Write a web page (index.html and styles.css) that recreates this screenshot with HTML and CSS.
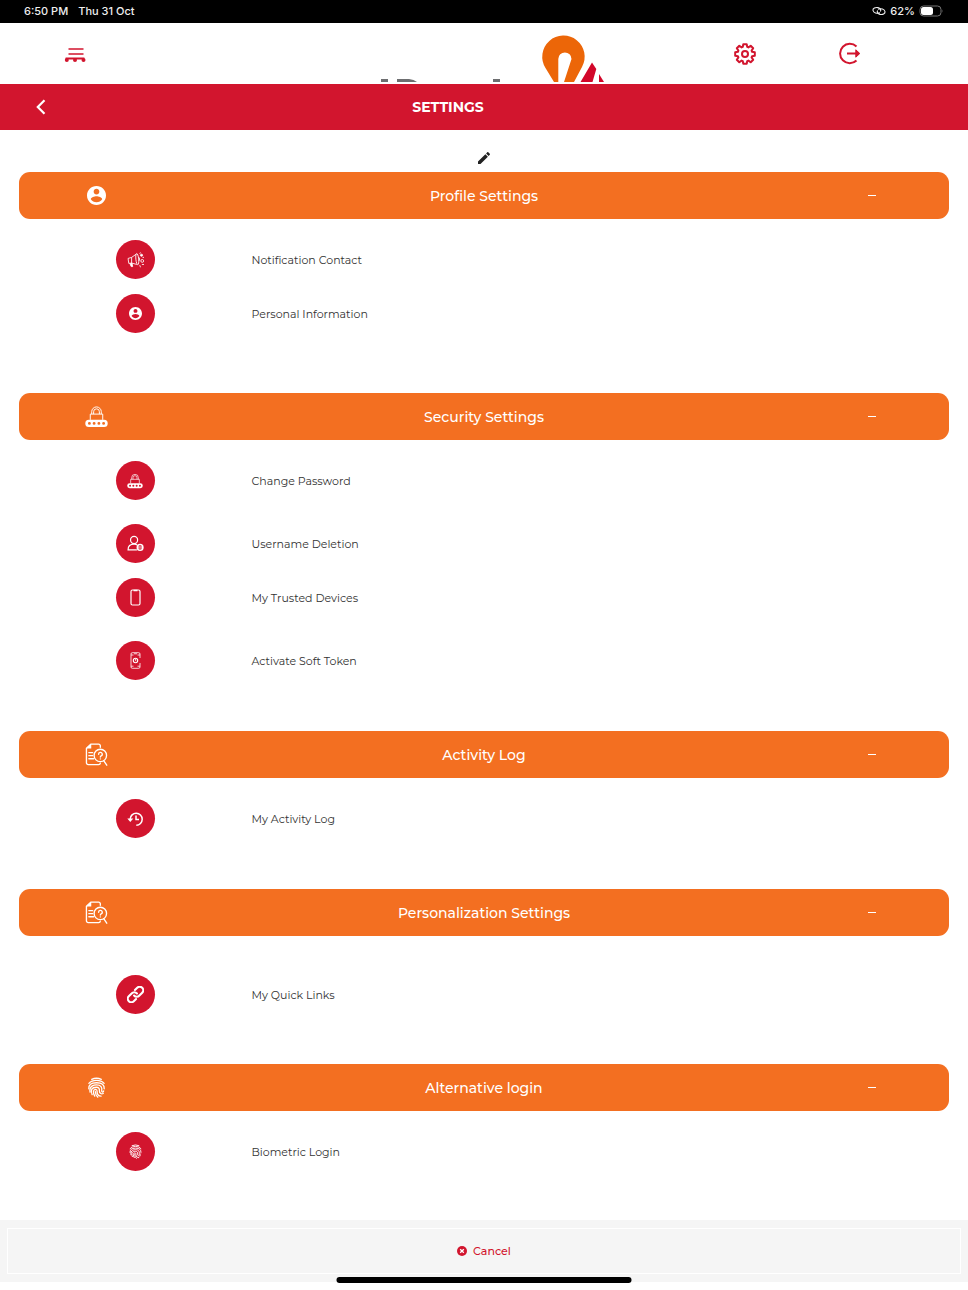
FILE: index.html
```
<!DOCTYPE html>
<html lang="en">
<head>
    <meta charset="UTF-8">
    <meta name="viewport" content="width=device-width, initial-scale=1.0">
    <title>Settings</title>
    <link rel="stylesheet" href="styles.css">
</head>
<body>
    <!-- Shared icons -->
    <svg class="icon-defs" aria-hidden="true">
        <symbol id="icon-user" viewBox="2 2 20 20">
            <path fill="currentColor" d="M12 2C6.48 2 2 6.48 2 12s4.48 10 10 10 10-4.48 10-10S17.52 2 12 2zm0 3c1.66 0 3 1.34 3 3s-1.34 3-3 3-3-1.34-3-3 1.34-3 3-3zm0 14.2c-2.5 0-4.71-1.28-6-3.22.03-1.99 4-3.08 6-3.08 1.99 0 5.97 1.09 6 3.08-1.29 1.94-3.5 3.22-6 3.22z"/>
        </symbol>
        <symbol id="icon-lock" viewBox="0 0 24 24">
            <path fill="none" stroke="currentColor" d="M5.5 15.5V9.5h13v6M7 9.500V7a5 5 0 0 1 10 0v2.500M9 9.500V7a3 3 0 0 1 6 0v2.500"/>
            <path fill="currentColor" fill-rule="evenodd" d="M4 15.500h16a3.700 3.700 0 0 1 0 7.400H4a3.700 3.700 0 0 1 0-7.400zM4.600 17.700a1.500 1.500 0 1 0 0 3 1.500 1.500 0 0 0 0-3zM9.500 17.700a1.500 1.500 0 1 0 0 3 1.500 1.500 0 0 0 0-3zM14.500 17.700a1.500 1.500 0 1 0 0 3 1.500 1.500 0 0 0 0-3zM19.400 17.700a1.500 1.500 0 1 0 0 3 1.500 1.500 0 0 0 0-3z"/>
        </symbol>
        <symbol id="icon-log" viewBox="0 0 24 24">
            <g fill="none" stroke="currentColor" stroke-width="1.400" stroke-linecap="round" stroke-linejoin="round">
                <path d="M16 4.500V3a1.800 1.800 0 0 0-1.800-1.800H6L1.500 5.500v15.200A1.800 1.800 0 0 0 3.300 22.500h11A1.800 1.800 0 0 0 16 21M4 10h4M4 13.200h4M4 16.400h5"/>
                <circle cx="16" cy="13" r="6.500"/>
                <path d="M19.700 18.700l3 4.500M14.200 11.700a1.900 1.900 0 1 1 2.700 1.700q-.9.4-.9 1.200M16 16.500v.1"/>
            </g>
            <path fill="currentColor" d="M6.500 1v4.800H1.300z"/>
        </symbol>
        <symbol id="icon-fingerprint" viewBox="0 0 24 24">
            <g fill="none" stroke="currentColor" stroke-width="1.500" stroke-linecap="round">
                <path d="M6.500 2.600Q12 .200 17.500 2.600"/>
                <path d="M3.300 7.300Q6.500 3.800 12 3.800T20.700 7.300"/>
                <path d="M3.200 13.500Q2.700 6.700 12 6.600T20.800 13.500"/>
                <path d="M4.700 17.300C3 9 11 9.100 12 9.100c5.300 0 6.600 3 6 6.500-.3 2.100 2 2 2.200.4"/>
                <path d="M7 20.200C4.800 14.600 6.600 11.700 11.800 11.700c3.300 0 3.700 2 3.500 4-.1 3.200 2.600 4.100 4.400 3.200"/>
                <path d="M10 21.800C7.700 17.500 8 14.300 11 14.200c2 0 1.600 1.500 1.700 3 .1 3 2.300 4.700 4.500 4.700"/>
                <path d="M10.700 16.800c.2 3 1.300 5 2.800 6.200"/>
            </g>
        </symbol>
    </svg>

    <div class="status-bar">
        <span>6:50 PM</span>
        <span>Thu 31 Oct</span>
        <div class="status-right">
            <svg width="14" height="10" viewBox="0 0 14 10" fill="none" stroke="currentColor" stroke-width="1.100">
                <path d="M8 6.800C5 8 1.500 6.700 1 4.500.5 2.200 3.500 1 6 1.600c2.200.6 3.400 2.200 2.400 4"/>
                <path d="M6 3.200C9 2 12.500 3.300 13 5.500c.5 2.300-2.500 3.500-5 2.900-2.200-.6-3.400-2.200-2.400-4"/>
            </svg>
            <span>62%</span>
            <svg width="25" height="12" viewBox="0 0 25 12">
                <rect x="1" y="1" width="21" height="10" rx="3.500" fill="none" stroke="#777"/>
                <rect x="2" y="2" width="12" height="8" rx="2.500" fill="#fff"/>
                <path d="M23.500 4.500q1 1.500 0 3z" fill="#777"/>
            </svg>
        </div>
    </div>

    <header class="top-bar">
        <button class="icon-btn menu-btn" aria-label="Menu">
            <svg width="22" height="16" viewBox="0 0 22 16">
                <path d="M4.500 3h15M4.500 8h15" stroke="currentColor" stroke-width="1.700" fill="none"/>
                <path d="M2.500 13.500V12.500h17v1" stroke="currentColor" stroke-width="1.800" fill="none"/>
                <g fill="currentColor">
                    <circle cx="2.800" cy="14" r="2"/>
                    <circle cx="11" cy="14" r="2"/>
                    <circle cx="19.500" cy="14" r="2"/>
                </g>
            </svg>
        </button>
        <svg class="logo" width="224" height="61" viewBox="0 0 224 61" role="img" aria-label="Bank logo">
            <path fill="#6d6e70" d="M0 56h7v3H0zM16 56h12q5 .300 8 3H16zM112 56h7v3h-7z"/>
            <path fill="#ec6608" d="M173 59L164.500 45a21.200 21.200 0 1 1 36.500-1L193 59H183L190.500 36a6.600 6.600 0 1 0-13.200 0V59z"/>
            <path fill="#d2072a" d="M199.500 59L211 39.500 215.300 46 211.500 59zM218 51L223 59h-5z"/>
        </svg>
        <button class="icon-btn" aria-label="Settings">
            <svg width="24" height="24" viewBox="0 0 24 24" fill="none" stroke="currentColor" stroke-width="2" stroke-linejoin="round">
                <path d="M13.700 2.200L14.200 4.900 15.400 5.400 17.700 3.800 20.200 6.300 18.600 8.600 19.100 9.800 21.800 10.300V13.700L19.100 14.200 18.600 15.400 20.200 17.700 17.700 20.200 15.400 18.600 14.200 19.100 13.700 21.800H10.300L9.800 19.100 8.600 18.600 6.300 20.200 3.800 17.700 5.400 15.400 4.900 14.200 2.200 13.700V10.300L4.900 9.800 5.400 8.600 3.800 6.300 6.300 3.800 8.600 5.400 9.800 4.900 10.300 2.200z"/>
                <circle cx="12" cy="12" r="3"/>
            </svg>
        </button>
        <button class="icon-btn" aria-label="Log out">
            <svg width="24" height="24" viewBox="0 0 24 24" fill="none" stroke="currentColor" stroke-width="2">
                <path d="M18.500 4.500A9.700 9.700 0 1 0 18.500 18.500M9 11.500h12"/>
                <path d="M17.800 7.800l4 3.700-4 3.700z" fill="currentColor" stroke-width="1"/>
            </svg>
        </button>
    </header>

    <div class="title-bar">
        <button class="back-btn" aria-label="Back">
            <svg width="10" height="16" viewBox="0 0 10 16" fill="none" stroke="currentColor" stroke-width="2.200">
                <path d="M8.500 1.200L1.800 8l6.700 6.800"/>
            </svg>
        </button>
        <h1>SETTINGS</h1>
    </div>

    <main>
        <button class="edit-btn" aria-label="Edit">
            <svg width="16" height="16" viewBox="0 0 24 24" fill="currentColor">
                <path d="M3 17.250V21h3.750L17.810 9.940l-3.750-3.750L3 17.250zM20.710 7.040c.39-.39.39-1.020 0-1.410l-2.340-2.340c-.39-.39-1.020-.39-1.410 0l-1.830 1.830 3.750 3.750 1.830-1.830z"/>
            </svg>
        </button>

        <section>
            <button class="section-head" aria-expanded="true">
                <svg width="19" height="19"><use href="#icon-user"/></svg>
                <span>Profile Settings</span>
                <span class="minus"></span>
            </button>
            <div class="items">
                <a href="#" class="item">
                    <span class="circle">
                        <svg width="17" height="17" viewBox="0 0 24 24" fill="none" stroke="currentColor" stroke-width="1.200">
                            <path d="M1.500 10.500l5-1.500v8l-4 .5zM6.500 9L13 4.500M6.500 17l7.500 2"/>
                            <ellipse cx="14.500" cy="11.500" rx="2" ry="8" transform="rotate(-6 14.500 11.500)"/>
                            <path d="M4 17.500l2 4.500h2l-1-5" fill="currentColor"/>
                            <path d="M18 4l1-2M22 9h2M18 20l1 3M21 19h3M17 9q2 2 0 5"/>
                            <circle cx="20.500" cy="6" r="1.500" fill="currentColor"/>
                            <circle cx="21.500" cy="14" r="2"/>
                        </svg>
                    </span>
                    <span>Notification Contact</span>
                </a>
                <a href="#" class="item item-tall">
                    <span class="circle"><svg width="13" height="13"><use href="#icon-user"/></svg></span>
                    <span>Personal Information</span>
                </a>
            </div>
        </section>

        <section>
            <button class="section-head" aria-expanded="true">
                <svg width="23" height="23"><use href="#icon-lock"/></svg>
                <span>Security Settings</span>
                <span class="minus"></span>
            </button>
            <div class="items">
                <a href="#" class="item item-tall">
                    <span class="circle"><svg width="16" height="16"><use href="#icon-lock"/></svg></span>
                    <span>Change Password</span>
                </a>
                <a href="#" class="item">
                    <span class="circle">
                        <svg width="17" height="17" viewBox="0 0 24 24" fill="none" stroke="currentColor" stroke-width="1.700">
                            <circle cx="10" cy="7" r="5"/>
                            <path d="M14 21H1.500c0-5 3.500-8 8.500-8q2.500 0 4.500 1"/>
                            <circle cx="18.500" cy="17.500" r="5" fill="currentColor" stroke="none"/>
                            <path d="M17 15h3v5h-3zM18.500 15v5" stroke="#d2152e" stroke-width="1"/>
                        </svg>
                    </span>
                    <span>Username Deletion</span>
                </a>
                <a href="#" class="item item-tall">
                    <span class="circle">
                        <svg width="11" height="17" viewBox="0 0 11 17" fill="none" stroke="currentColor" stroke-width="1.200">
                            <rect x="1" y="1" width="9" height="15" rx="1.500"/>
                            <path d="M3.500 1.500h4" stroke-width="1.500"/>
                        </svg>
                    </span>
                    <span>My Trusted Devices</span>
                </a>
                <a href="#" class="item">
                    <span class="circle">
                        <svg width="11" height="17" viewBox="0 0 11 17" fill="none" stroke="currentColor" stroke-width=".800">
                            <path d="M10 6V2a1.300 1.300 0 0 0-1.300-1.300H2.300A1.300 1.300 0 0 0 1 2v13a1.300 1.300 0 0 0 1.300 1.300h6.400A1.300 1.300 0 0 0 10 15v-4M1 3h2.500M7.500 3H10M1 14.200h2.500M7.500 14.200H10M4 1.800h3"/>
                            <circle cx="5.500" cy="8.500" r="2.200" stroke-width="1.100"/>
                            <path d="M5.500 7v1.700l.8-.5"/>
                        </svg>
                    </span>
                    <span>Activate Soft Token</span>
                </a>
            </div>
        </section>

        <section>
            <button class="section-head" aria-expanded="true">
                <svg width="23" height="23"><use href="#icon-log"/></svg>
                <span>Activity Log</span>
                <span class="minus"></span>
            </button>
            <div class="items">
                <a href="#" class="item">
                    <span class="circle">
                        <svg width="16" height="16" viewBox="0 0 16 16" fill="none" stroke="currentColor" stroke-width="1.500">
                            <path d="M3.200 8A6 6 0 1 1 9.300 14.200M9 4.500V8.500H12"/>
                            <path d="M.300 7.500h6L3.300 11z" fill="currentColor" stroke="none"/>
                        </svg>
                    </span>
                    <span>My Activity Log</span>
                </a>
            </div>
        </section>

        <section>
            <button class="section-head" aria-expanded="true">
                <svg width="23" height="23"><use href="#icon-log"/></svg>
                <span>Personalization Settings</span>
                <span class="minus"></span>
            </button>
            <div class="items items-spaced">
                <a href="#" class="item">
                    <span class="circle">
                        <svg width="17" height="17" viewBox="0 0 24 24" fill="none" stroke="currentColor" stroke-width="3" stroke-linecap="round">
                            <path d="M10 13.500a5 5 0 0 0 7.500 0l4-4a5 5 0 0 0-7.070-7.070l-3.200 3.200M14 10.500a5 5 0 0 0-7.500 0l-4 4a5 5 0 0 0 7.070 7.070l3.200-3.200"/>
                        </svg>
                    </span>
                    <span>My Quick Links</span>
                </a>
            </div>
        </section>

        <section>
            <button class="section-head" aria-expanded="true">
                <svg width="21" height="21"><use href="#icon-fingerprint"/></svg>
                <span>Alternative login</span>
                <span class="minus"></span>
            </button>
            <div class="items">
                <a href="#" class="item">
                    <span class="circle"><svg width="15" height="15"><use href="#icon-fingerprint"/></svg></span>
                    <span>Biometric Login</span>
                </a>
            </div>
        </section>
    </main>

    <footer class="footer">
        <button class="cancel-btn">
            <svg width="10" height="10" viewBox="0 0 10 10">
                <circle cx="5" cy="5" r="5" fill="currentColor"/>
                <path d="M3.200 3.200l3.600 3.600M6.800 3.200L3.200 6.800" stroke="#fff" stroke-width="1.300"/>
            </svg>
            Cancel
        </button>
        <div class="home-indicator"></div>
    </footer>
</body>
</html>
```
FILE: styles.css
```
* {
    box-sizing: border-box;
}
body {
    font-family: Montserrat, Inter, sans-serif;
    margin: 0;
    min-height: 100vh;
    display: flex;
    flex-direction: column;
    background-color: #fff;
    color: #333;
}
button {
    font-family: inherit;
    border: none;
    background: none;
    padding: 0;
    color: inherit;
    cursor: pointer;
}
svg {
    display: block;
}
.icon-defs {
    position: absolute;
    width: 0;
    height: 0;
}
.status-bar {
    display: flex;
    align-items: center;
    gap: 10px;
    height: 23px;
    padding: 0 24px 1px;
    background-color: #000;
    color: #eee;
    font-family: Inter, sans-serif;
    font-size: 11px;
    font-weight: 500;
}
.status-right {
    display: flex;
    align-items: center;
    gap: 4px;
    margin-left: auto;
}
.top-bar {
    display: grid;
    grid-template-columns: 150px 1fr 105px 105px;
    align-items: center;
    height: 61px;
    padding-right: 66px;
    color: #d2152e;
}
.icon-btn {
    display: flex;
    justify-content: center;
}
.logo {
    justify-self: end;
    margin-right: 87px;
}
.title-bar {
    display: grid;
    grid-template-columns: 36px 1fr;
    align-items: center;
    height: 46px;
    padding: 0 108px 0 36px;
    background-color: #d2152e;
    color: #fff;
}
.title-bar h1 {
    margin: 0;
    padding-right: 36px;
    font-size: 14px;
    font-weight: 700;
    text-align: center;
}
main {
    flex: 1;
    padding: 0 19px;
}
.edit-btn {
    display: block;
    margin: 20px auto 6px;
    color: #222;
}
.section-head {
    display: grid;
    grid-template-columns: 2fr 8fr 2fr;
    align-items: center;
    justify-items: center;
    width: 100%;
    height: 47px;
    border-radius: 11px;
    background-color: #f36f21;
    color: #fff;
    font-size: 14px;
    font-weight: 500;
}
.minus {
    width: 8px;
    height: 1px;
    background-color: #fff;
}
.items {
    padding: 21px 0 36px;
}
.items-spaced {
    padding: 39px 0 35px;
}
section:last-child .items {
    padding-bottom: 34px;
}
.item {
    display: grid;
    grid-template-columns: 3fr 9fr;
    align-items: center;
    margin-bottom: 15px;
    color: #333;
    font-size: 11px;
    text-decoration: none;
}
.item-tall {
    margin-bottom: 24px;
}
.circle {
    display: flex;
    align-items: center;
    justify-content: center;
    justify-self: center;
    width: 39px;
    height: 39px;
    border-radius: 50%;
    background-color: #d2152e;
    color: #fff;
}
.footer {
    position: relative;
    margin-bottom: 8px;
    padding: 8px 7px;
    background-color: #f5f5f5;
}
.cancel-btn {
    display: flex;
    align-items: center;
    justify-content: center;
    gap: 6px;
    width: 100%;
    height: 46px;
    border: 1px solid #fff;
    color: #d2152e;
    font-size: 11px;
    font-weight: 500;
}
.home-indicator {
    position: absolute;
    bottom: -1px;
    left: 50%;
    width: 295px;
    height: 6px;
    transform: translateX(-50%);
    border-radius: 3px;
    background-color: #000;
}
```
